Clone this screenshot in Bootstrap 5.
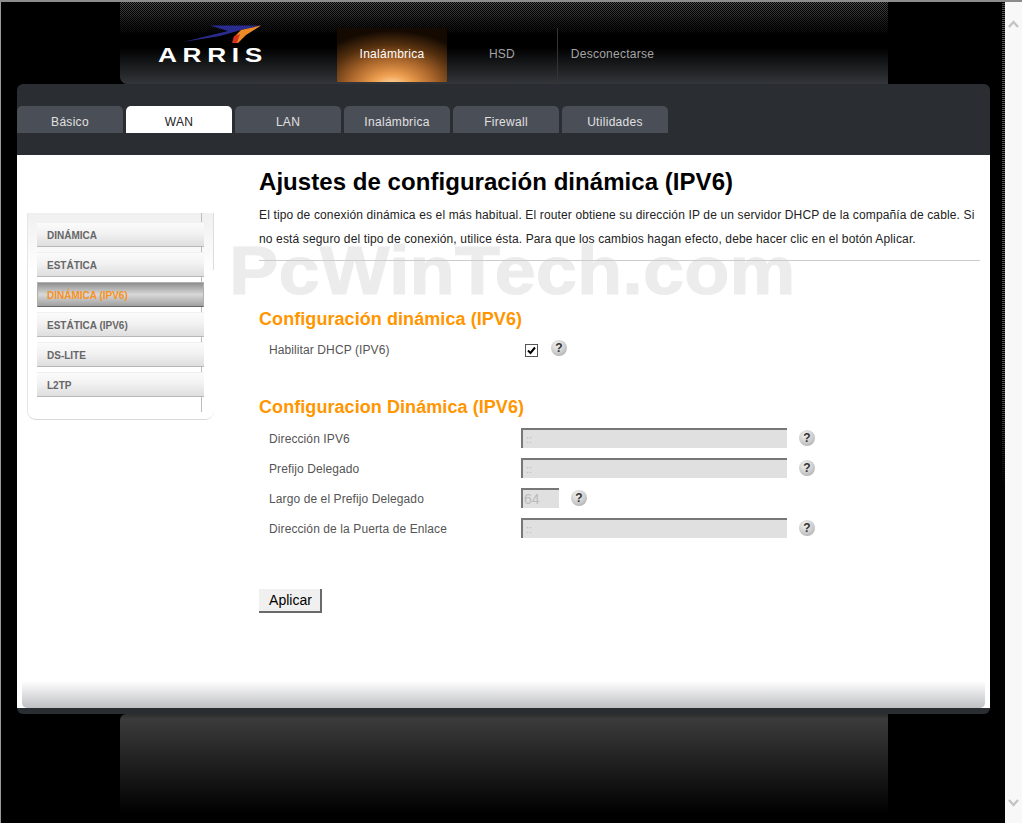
<!DOCTYPE html>
<html lang="es">
<head>
  <meta charset="UTF-8">
  <title>Ajustes de configuración dinámica (IPV6)</title>
  <link href="https://cdn.jsdelivr.net/npm/bootstrap@5.3.0/dist/css/bootstrap.min.css" rel="stylesheet">
  <style>
    html, body { height: 823px; overflow: hidden; }
    body { background: #000; font-family: "Liberation Sans", Arial, sans-serif; font-size: 12px; color: #333; }
    .top-line { height: 2px; background: #8c8c8c; }
    .shell {
      height: 821px; border-left: 1px solid #999;
      background:
        linear-gradient(rgba(0,0,0,0) 390px, #000 485px) right top / 3px 100% no-repeat,
        repeating-linear-gradient(#000 0 1px, #555 1px 2px) right top / 3px 100% no-repeat,
        #000;
    }
    .rail { width: 17px; background: #f8f8f8; padding: 18px 0 16px; }
    .head-bar {
      width: 768px; height: 82px; margin-left: 119px; border-radius: 0 0 0 8px;
      background:
        linear-gradient(rgba(0,0,0,.1), #000) 0 0 / 100% 33px no-repeat,
        repeating-conic-gradient(#5a5a5a 0 25%, #000 0 50%) 0 0 / 2px 2px,
        #000;
      background-size: 100% 33px, 2px 2px;
      position: relative;
    }
    .head-fade { position: absolute; inset: 33px 0 0 0; background: linear-gradient(#000 0, #000 25%, #33363a 100%); border-radius: 0 0 0 8px; }
    .head-in { position: relative; height: 82px; }
    .logo-box { width: 217px; padding: 23px 0 0 38px; }
    .logo-txt { color: #fff; font-weight: 700; font-size: 21px; line-height: 16px; letter-spacing: 4.5px; margin-top: 2px; transform: scaleX(1.25); transform-origin: left center; white-space: nowrap; }
    .head-link { width: 110px; height: 54px; margin-top: 26px; padding-top: 18px; text-align: center; color: #a4a4a4; text-decoration: none; letter-spacing: .25px; line-height: 16px; }
    .head-link.is-on {
      color: #fff;
      background: radial-gradient(ellipse 80% 105% at 50% 110%, #ffe6bf 0, #f0a050 22%, #a8642a 50%, #55300f 75%, #140a02 100%);
    }
    .head-link.is-sep { border-left: 1px solid #333; }
    .panel { width: 973px; margin-left: 16px; }
    .tab-zone { height: 71px; padding-top: 22px; background: #2a2d32; border-radius: 6px 6px 0 0; }
    .tab-item {
      width: 106px; height: 27px; margin-right: 3px; padding-top: 9px; text-align: center;
      background: #4a4e57; color: #e0e0e0; text-decoration: none; border-radius: 5px 5px 0 0; line-height: 14px; letter-spacing: .3px;
    }
    .tab-item.is-on { background: #fff; color: #222; }
    .page-body { height: 553px; background: #fff; position: relative; }
    .wmark {
      position: absolute; left: 212px; top: 91px; font-size: 68px; line-height: 48px; font-weight: 700;
      color: #ececec; -webkit-text-stroke: 1px #ececec; transform: scaleX(1.09); transform-origin: left center; white-space: nowrap;
    }
    .side-box {
      width: 187px; height: 207px; margin: 58px 0 0 10px; padding: 9px 0 0 9px; border-left: 1px solid #e6e6e6; border-bottom: 1px solid #d8d8d8;
      border-radius: 0 0 9px 9px; flex: none;
      background:
        linear-gradient(#bcbcbc, #bcbcbc) 173px 0 / 1px 199px no-repeat,
        linear-gradient(#ddd, #ddd) 185px 0 / 1px 57px no-repeat,
        linear-gradient(#f0f0f0, #fff 60px) 0 0 / 100% 60px no-repeat,
        #fff;
      position: relative;
    }
    .side-item {
      display: block; width: 167px; height: 25px; margin-bottom: 5px; padding-left: 10px; line-height: 25px;
      font-size: 10px; font-weight: 700; color: #666; text-decoration: none;
      border-top: 1px solid #f0f0f0; border-bottom: 1px solid #b8b8b8;
      background: linear-gradient(#fbfbfb, #f2f2f2 45%, #dedede);
    }
    .side-item.is-on {
      color: #f7931e; border: 1px solid #b0b0b0; border-bottom-color: #666; padding-left: 9px;
      background: linear-gradient(#8f8f8f, #d8d8d8 50%, #a0a0a0);
    }
    .form-side { width: 721px; margin-left: 45px; position: relative; }
    .page-title { margin: 12px 0 6px; font-size: 24px; line-height: 30px; font-weight: 700; color: #000; letter-spacing: .05px; }
    .intro { margin: 0 0 9px; line-height: 24px; color: #222; letter-spacing: .14px; }
    .rule-line { height: 1px; background: #ccc; margin-bottom: 46px; }
    .sec-title { margin: 0 0 4px; font-size: 18px; line-height: 24px; font-weight: 700; color: #ff9600; letter-spacing: .07px; }
    .sec-next { margin-top: 30px; }
    .row-line { height: 30px; padding-left: 10px; color: #555; letter-spacing: .1px; }
    .row-label { width: 252px; flex: none; }
    .row-label.is-low { padding-top: 2px; }
    .ro-input {
      height: 20px; width: 266px; padding: 0 0 0 3px; border: 0; border-top: 2px solid #777; border-left: 2px solid #777;
      background: #e0e0e0; color: #bbb; font-size: 11px; font-family: inherit; border-radius: 0;
    }
    .ro-input.is-short { width: 38px; font-size: 14px; padding-left: 1px; }
    .chk-box {
      appearance: none; width: 13px; height: 13px; margin: 0 0 0 4px; border: 1px solid #555; background: #fff center / 11px 11px no-repeat
        url("data:image/svg+xml,%3Csvg xmlns='http://www.w3.org/2000/svg' viewBox='0 0 11 11'%3E%3Cpath d='M2 5.5l2.5 2.5L9 2.5' fill='none' stroke='%23000' stroke-width='2'/%3E%3C/svg%3E");
    }
    .help-dot {
      width: 16px; height: 16px; border-radius: 50%; flex: none; text-align: center; font-size: 12px; line-height: 16px; font-weight: 700; color: #333;
      background: radial-gradient(circle at 40% 30%, #f2f2f2, #c8c8c8 60%, #9a9a9a);
    }
    .help-wide { margin-left: 12px; margin-top: -1px; }
    .help-chk { margin: -5px 0 0 13px; }
    .apply-btn {
      margin-top: 46px; width: 63px; height: 24px; padding: 0 0 0 2px; font-size: 14px; line-height: 20px; color: #000; background: #f0f0f0; font-family: inherit;
      border: 0; border-right: 2px solid #6a6a6a; border-bottom: 2px solid #6a6a6a; border-radius: 0;
    }
    .foot-fade {
      position: absolute; left: 5px; right: 5px; bottom: 0; height: 27px; border-radius: 0 0 5px 5px;
      background: linear-gradient(#fff, #bfc0c4);
    }
    .foot-dark { height: 6px; background: #2a2d32; border-radius: 0 0 6px 6px; }
    .low-box { width: 768px; height: 109px; margin-left: 119px; border-radius: 6px 0 0 0; background: linear-gradient(#2c2c2c 0, #3b3b3b 5px, #000 100px); }
  </style>
</head>
<body>
  <div class="top-line"></div>
  <div class="d-flex">
    <div class="shell flex-fill overflow-hidden">
      <div class="head-bar">
        <div class="head-fade"></div>
        <div class="head-in d-flex">
          <div class="logo-box">
            <svg width="105" height="20" viewBox="0 0 105 20" class="d-block">
              <polygon points="25,17 70,6 52,0.5 103,0.5 83,5 62,11" fill="#2b2c8f"/>
              <polygon points="103,0.5 88,10 80,18 76,18 78,10 83,5" fill="#f08a24"/>
              <polygon points="74,18 76,11 82,9 79,18" fill="#d8321e"/>
            </svg>
            <div class="logo-txt">ARRIS</div>
          </div>
          <a class="head-link is-on" href="#">Inalámbrica</a>
          <a class="head-link" href="#">HSD</a>
          <a class="head-link is-sep" href="#">Desconectarse</a>
        </div>
      </div>
      <div class="panel">
        <div class="tab-zone">
          <nav class="d-flex">
            <a class="tab-item" href="#">Básico</a>
            <a class="tab-item is-on" href="#">WAN</a>
            <a class="tab-item" href="#">LAN</a>
            <a class="tab-item" href="#">Inalámbrica</a>
            <a class="tab-item" href="#">Firewall</a>
            <a class="tab-item" href="#">Utilidades</a>
          </nav>
        </div>
        <div class="page-body d-flex">
          <div class="wmark">PcWinTech.com</div>
          <div class="side-box">
            <a class="side-item" href="#">DINÁMICA</a>
            <a class="side-item" href="#">ESTÁTICA</a>
            <a class="side-item is-on" href="#">DINÁMICA (IPV6)</a>
            <a class="side-item" href="#">ESTÁTICA (IPV6)</a>
            <a class="side-item" href="#">DS-LITE</a>
            <a class="side-item" href="#">L2TP</a>
          </div>
          <div class="form-side">
            <h1 class="page-title">Ajustes de configuración dinámica (IPV6)</h1>
            <p class="intro">El tipo de conexión dinámica es el más habitual. El router obtiene su dirección IP de un servidor DHCP de la compañía de cable. Si no está seguro del tipo de conexión, utilice ésta. Para que los cambios hagan efecto, debe hacer clic en el botón Aplicar.</p>
            <div class="rule-line"></div>
            <h2 class="sec-title">Configuración dinámica (IPV6)</h2>
            <div class="row-line d-flex align-items-center">
              <span class="row-label">Habilitar DHCP (IPV6)</span>
              <input class="chk-box" type="checkbox" checked>
              <span class="help-dot help-chk">?</span>
            </div>
            <h2 class="sec-title sec-next">Configuracion Dinámica (IPV6)</h2>
            <div class="row-line d-flex align-items-center">
              <span class="row-label is-low">Dirección IPV6</span>
              <input class="ro-input" value="::" disabled>
              <span class="help-dot help-wide">?</span>
            </div>
            <div class="row-line d-flex align-items-center">
              <span class="row-label is-low">Prefijo Delegado</span>
              <input class="ro-input" value="::" disabled>
              <span class="help-dot help-wide">?</span>
            </div>
            <div class="row-line d-flex align-items-center">
              <span class="row-label is-low">Largo de el Prefijo Delegado</span>
              <input class="ro-input is-short" value="64" disabled>
              <span class="help-dot help-wide">?</span>
            </div>
            <div class="row-line d-flex align-items-center">
              <span class="row-label is-low">Dirección de la Puerta de Enlace</span>
              <input class="ro-input" value="::" disabled>
              <span class="help-dot help-wide">?</span>
            </div>
            <button class="apply-btn d-block" type="button">Aplicar</button>
          </div>
          <div class="foot-fade"></div>
        </div>
        <div class="foot-dark"></div>
      </div>
      <div class="low-box"></div>
    </div>
    <div class="rail d-flex flex-column justify-content-between align-items-center">
      <svg width="11" height="9" viewBox="0 0 11 9"><polyline points="1,7 5.5,2 10,7" fill="none" stroke="#c4c4c4" stroke-width="2.4"/></svg>
      <svg width="11" height="9" viewBox="0 0 11 9"><polyline points="1,2 5.5,7 10,2" fill="none" stroke="#c4c4c4" stroke-width="2.4"/></svg>
    </div>
  </div>
  <script src="https://cdn.jsdelivr.net/npm/bootstrap@5.3.0/dist/js/bootstrap.bundle.min.js"></script>
</body>
</html>
